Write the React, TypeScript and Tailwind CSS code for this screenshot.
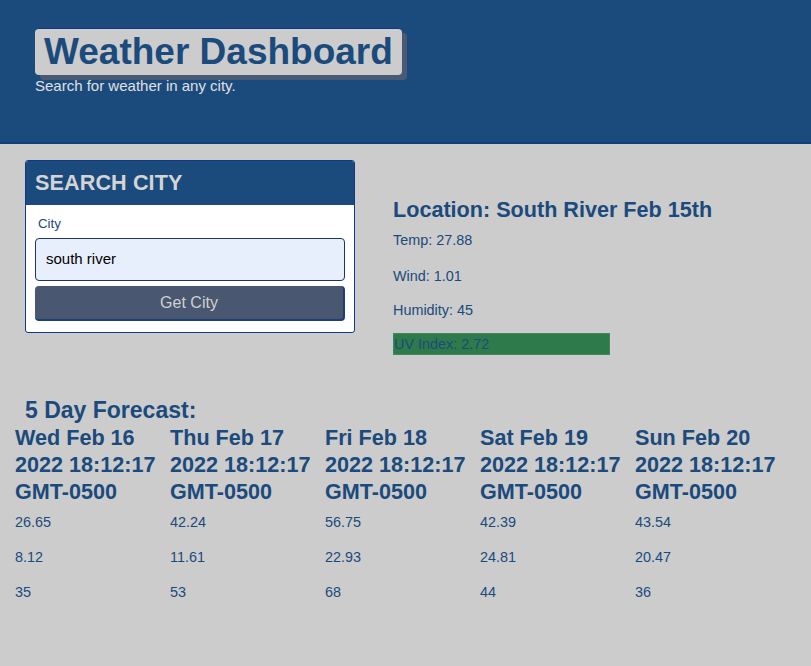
import React from 'react';

const days = [
  { date: 'Wed Feb 16', temp: '26.65', wind: '8.12', hum: '35' },
  { date: 'Thu Feb 17', temp: '42.24', wind: '11.61', hum: '53' },
  { date: 'Fri Feb 18', temp: '56.75', wind: '22.93', hum: '68' },
  { date: 'Sat Feb 19', temp: '42.39', wind: '24.81', hum: '44' },
  { date: 'Sun Feb 20', temp: '43.54', wind: '20.47', hum: '36' },
];

export default function App() {
  return (
    <div className="min-h-[666px] bg-[#cccccc] text-[#1b4a7c]" style={{ fontFamily: '"Liberation Sans", Arial, sans-serif' }}>
      {/* Header */}
      <header className="h-[144px] bg-[#1b4a7c] border-b-2 border-[#123d7e] pl-[35px] pt-[28px]">
        <div className="inline-block rounded-[4px] border-t border-[#0e3a86] bg-[#cccccc] px-[9px] h-[47px] shadow-[5px_5px_0_#4b5a74]">
          <h1 className="text-[37px] leading-[46px] font-bold text-[#1b4a7c]">Weather Dashboard</h1>
        </div>
        <p className="text-[15px] leading-[17px] text-[#e0e0e0] mt-[2px]">Search for weather in any city.</p>
      </header>

      {/* Search + current weather */}
      <div className="flex items-start">
        <section className="ml-[25px] mt-[16px] w-[330px] rounded-[3px] border-[1.5px] border-[#13378a] bg-white overflow-hidden">
          <div className="h-[44px] bg-[#1b4a7c] pl-[9px] flex items-center">
            <h2 className="text-[21.6px] font-bold text-[#d4d4d4] tracking-[0.1px]">SEARCH CITY</h2>
          </div>
          <div className="px-[9px] pt-[11px] pb-[11px]">
            <label className="block pl-[3px] text-[13.3px] leading-[16px] text-[#1b4a7c]">City</label>
            <div className="mt-[6px] h-[43px] rounded-[4px] border border-[#1f3560] bg-[#e8effc] pl-[10px] flex items-center text-[15px] text-black">
              south river
            </div>
            <button className="mt-[5px] w-full h-[35px] rounded-[4px] bg-[#4a5770] border-r-2 border-b-2 border-[#1a3f7a] text-[16px] text-[#d0d0d0]">
              Get City
            </button>
          </div>
        </section>

        <section className="ml-[38px] mt-[53px]">
          <h2 className="text-[21.6px] leading-[26px] font-bold">Location: South River Feb 15th</h2>
          <p className="mt-[9px] text-[14.4px] leading-[17px]">Temp: 27.88</p>
          <p className="mt-[19px] text-[14.4px] leading-[17px]">Wind: 1.01</p>
          <p className="mt-[17px] text-[14.4px] leading-[17px]">Humidity: 45</p>
          <p className="mt-[14px] w-[217px] h-[22px] bg-[#2f7a4b] border border-[#3b8a58] text-[14.4px] leading-[20px] text-[#1b4a7c]">UV Index: 2.72</p>
        </section>
      </div>

      {/* Forecast */}
      <section className="mt-[42px]">
        <h2 className="pl-[25px] text-[23px] leading-[26px] font-bold">5 Day Forecast:</h2>
        <div className="flex pl-[15px] mt-[1px]">
          {days.map(d => (
            <div key={d.date} className="w-[155px]">
              <h3 className="text-[21.6px] leading-[27px] font-bold">
                {d.date}
                <br />
                2022 18:12:17
                <br />
                GMT-0500
              </h3>
              <p className="mt-[9px] text-[14.4px] leading-[17px]">{d.temp}</p>
              <p className="mt-[18px] text-[14.4px] leading-[17px]">{d.wind}</p>
              <p className="mt-[18px] text-[14.4px] leading-[17px]">{d.hum}</p>
            </div>
          ))}
        </div>
      </section>
    </div>
  );
}
